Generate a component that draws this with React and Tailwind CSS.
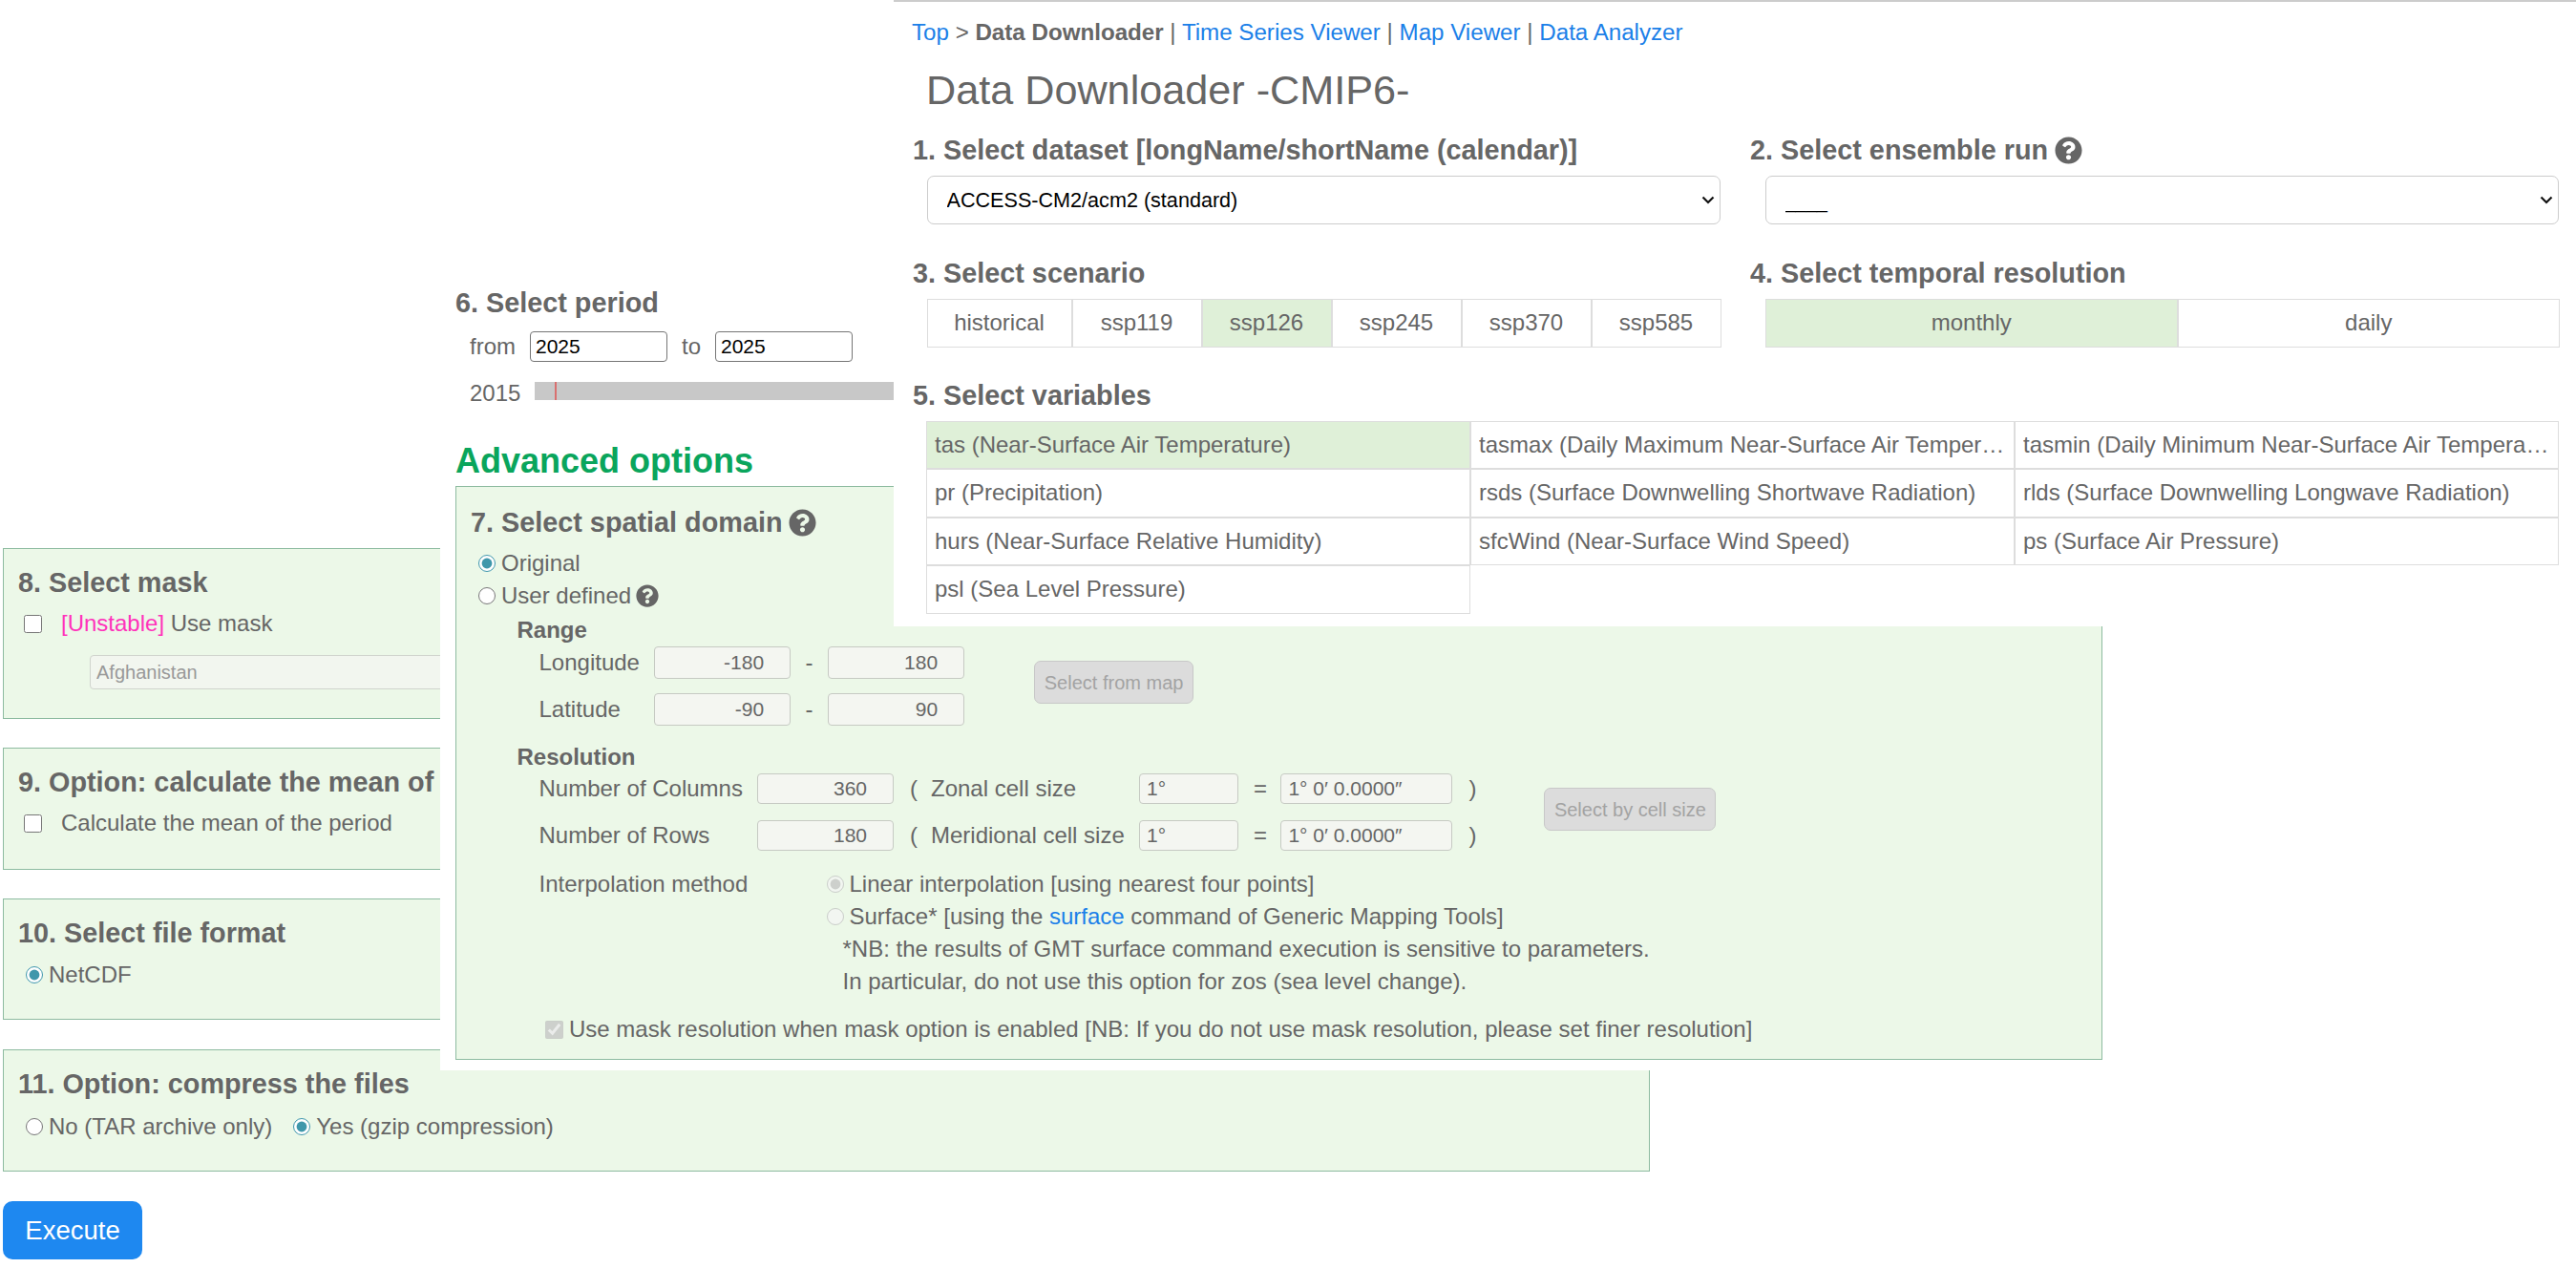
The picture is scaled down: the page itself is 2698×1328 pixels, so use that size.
import React from "react";
import { FaQuestionCircle } from "react-icons/fa";

const scenarios = ["historical", "ssp119", "ssp126", "ssp245", "ssp370", "ssp585"];
const variables = [
  "tas (Near-Surface Air Temperature)",
  "tasmax (Daily Maximum Near-Surface Air Temperature)",
  "tasmin (Daily Minimum Near-Surface Air Temperature)",
  "pr (Precipitation)",
  "rsds (Surface Downwelling Shortwave Radiation)",
  "rlds (Surface Downwelling Longwave Radiation)",
  "hurs (Near-Surface Relative Humidity)",
  "sfcWind (Near-Surface Wind Speed)",
  "ps (Surface Air Pressure)",
  "psl (Sea Level Pressure)",
];

const Heading = ({ children, className = "" }) => (
  <h3 className={`flex items-center h-[28px] text-[28.8px] font-bold leading-[28px] whitespace-nowrap ${className}`}>
    {children}
  </h3>
);

const Radio = ({ checked, disabled, name }) => (
  <input
    type="radio"
    name={name}
    defaultChecked={checked}
    disabled={disabled}
    className="w-[18px] h-[18px] m-0 shrink-0 accent-[#3f97ab]"
  />
);

const Field = ({ value, width, align = "right" }) => (
  <input
    disabled
    value={value}
    className={`${width} h-full px-[7px] rounded-[4px] border border-[#c6cac3] bg-[#f4f6f1] text-[#666] text-[21px] ${
      align === "right" ? "text-right pr-[27px]" : "text-left"
    }`}
  />
);

const GreyButton = ({ children, className = "" }) => (
  <button
    disabled
    className={`h-[45px] mt-[15px] rounded-[7px] border border-[#c8c8c8] bg-[#dcdcdc] text-[#a3a3a3] text-[20px] whitespace-nowrap ${className}`}
  >
    {children}
  </button>
);

const Box = ({ children, className = "" }) => (
  <div className={`border border-[#8dbba0] bg-[#ecf8e8] ${className}`}>{children}</div>
);

const Dropdown = ({ value, className = "", size }) => (
  <div className={`relative w-[831.5px] h-[51px] ${className}`}>
    <select className={`w-full h-full pl-[20px] pt-[2px] rounded-[7px] border border-[#ccc] bg-white text-black appearance-none ${size}`}>
      <option>{value}</option>
    </select>
    <svg
      viewBox="0 0 14 9"
      className="absolute right-[6px] top-[21px] w-[14px] h-[9px] pointer-events-none"
      fill="none"
      stroke="#111"
      strokeWidth="2.2"
    >
      <path d="M1.5 1.5 7 7l5.5-5.5" />
    </svg>
  </div>
);

const TopPanel = () => (
  <div className="absolute left-[936px] right-0 top-0 h-[656px] bg-white border-t-2 border-[#ccc] pl-[20px] pr-[18px]">
    <div className="mt-[20px] -ml-[1px] h-[24px] leading-[24px] text-[24.15px] whitespace-nowrap">
      <a className="text-[#1b80e8]">Top</a> &gt; <b>Data Downloader</b> |{" "}
      <a className="text-[#1b80e8]">Time Series Viewer</a> | <a className="text-[#1b80e8]">Map Viewer</a> |{" "}
      <a className="text-[#1b80e8]">Data Analyzer</a>
    </div>
    <h1 className="mt-[26px] ml-[14px] h-[44px] text-[43.2px] leading-[44px]">Data Downloader -CMIP6-</h1>

    <div className="grid grid-cols-[877px_1fr] mt-[27px]">
      <div>
        <Heading>1. Select dataset [longName/shortName (calendar)]</Heading>
        <Dropdown value="ACCESS-CM2/acm2 (standard)" size="text-[21.6px]" className="mt-[13px] ml-[14.5px]" />
      </div>
      <div>
        <Heading>
          2. Select ensemble run
          <FaQuestionCircle className="ml-[7px] w-[29px] h-[29px]" />
        </Heading>
        <Dropdown value="____" size="text-[20px]" className="mt-[13px] ml-[15.5px]" />
      </div>

      <div className="mt-[37px]">
        <Heading>3. Select scenario</Heading>
        <div className="mt-[13px] ml-[14.5px] flex h-[50.5px] w-[832px]">
          {scenarios.map((s, i) => (
            <div
              key={s}
              className={`flex items-center justify-center border border-[#ddd] ${i === 0 ? "w-[152px]" : "flex-1"} ${
                s === "ssp126" ? "bg-[#dff0d8]" : ""
              }`}
            >
              {s}
            </div>
          ))}
        </div>
      </div>
      <div className="mt-[37px]">
        <Heading>4. Select temporal resolution</Heading>
        <div className="mt-[13px] ml-[15.5px] flex h-[50.5px] w-[832px]">
          <div className="w-[432.5px] flex items-center justify-center border border-[#ddd] bg-[#dff0d8]">monthly</div>
          <div className="flex-1 flex items-center justify-center border border-[#ddd]">daily</div>
        </div>
      </div>
    </div>

    <Heading className="mt-[36px]">5. Select variables</Heading>
    <div className="mt-[13px] ml-[14px] w-[1710px] grid grid-cols-3 auto-rows-[50.5px]">
      {variables.map((v, i) => (
        <div
          key={v}
          className={`flex items-center min-w-0 px-[8px] border border-[#ddd] ${i === 0 ? "bg-[#dff0d8]" : ""}`}
        >
          <span className="truncate">{v}</span>
        </div>
      ))}
    </div>
  </div>
);

const MiddlePanel = () => (
  <div className="absolute left-[461px] top-[290px] w-[1755px] h-[831px] bg-white pl-[16px] pt-[13px]">
    <Heading>6. Select period</Heading>
    <div className="mt-[16px] ml-[15px] flex items-center h-[32px]">
      <span className="w-[63px]">from</span>
      <input defaultValue="2025" className="w-[144px] h-full px-[5px] rounded-[4px] border border-[#767676] text-black text-[21px]" />
      <span className="w-[50px] pl-[15px]">to</span>
      <input defaultValue="2025" className="w-[144px] h-full px-[5px] rounded-[4px] border border-[#767676] text-black text-[21px]" />
    </div>
    <div className="mt-[20px] ml-[15px] flex items-start h-[24px] leading-[24px]">
      <span className="w-[68px] mt-[1px]">2015</span>
      <div className="w-[500px] h-[19px] mt-[1px] bg-[#c8c8c8] pl-[21px]">
        <div className="w-[2px] h-full bg-[#d9706f]" />
      </div>
    </div>
    <h2 className="mt-[40px] h-[40px] leading-[40px] text-[36px] font-bold text-[#0aa55c]">Advanced options</h2>
    <Box className="mt-[6px] w-[1725px] h-[601px] pl-[15px]">
      <Heading className="mt-[23px]">
        7. Select spatial domain
        <FaQuestionCircle className="ml-[7px] w-[29px] h-[29px]" />
      </Heading>
      <div className="mt-[17px] ml-[8px] flex items-center gap-[6px] h-[24px]">
        <Radio name="domain" checked /> Original
      </div>
      <div className="mt-[10px] ml-[8px] flex items-center gap-[6px] h-[24px]">
        <Radio name="domain" /> User defined
        <FaQuestionCircle className="-ml-[1px] w-[24px] h-[24px]" />
      </div>
      <div className="mt-[12px] ml-[48.5px] h-[24px] leading-[24px] font-bold">Range</div>

      <div className="flex ml-[71.5px] mt-[5px]">
        <div>
          {[["Longitude", "-180", "180"], ["Latitude", "-90", "90"]].map(([label, a, b], i) => (
            <div key={label} className={`flex items-center h-[34px] ${i ? "mt-[15px]" : ""}`}>
              <span className="w-[120.6px]">{label}</span>
              <Field value={a} width="w-[143px]" />
              <span className="w-[39px] text-center">-</span>
              <Field value={b} width="w-[143px]" />
            </div>
          ))}
        </div>
        <GreyButton className="ml-[73px] w-[167px]">Select from map</GreyButton>
      </div>

      <div className="mt-[21px] ml-[48.5px] h-[24px] leading-[24px] font-bold">Resolution</div>
      <div className="flex ml-[71.5px] mt-[5px]">
        <div>
          {[["Number of Columns", "360", "Zonal cell size"], ["Number of Rows", "180", "Meridional cell size"]].map(
            ([label, n, cell], i) => (
              <div key={label} className={`flex items-center h-[32px] ${i ? "mt-[17px]" : ""}`}>
                <span className="w-[228.5px]">{label}</span>
                <Field value={n} width="w-[143px]" />
                <span className="w-[39px] pl-[17px]">(</span>
                <span className="w-[218px]">{cell}</span>
                <Field value="1°" width="w-[104px]" align="left" />
                <span className="w-[44.4px] pl-[16px]">=</span>
                <Field value="1° 0′ 0.0000″" width="w-[180px]" align="left" />
                <span className="w-[96px] pl-[17px]">)</span>
              </div>
            ),
          )}
        </div>
        <GreyButton className="w-[180px]">Select by cell size</GreyButton>
      </div>

      <div className="flex ml-[71.5px] mt-[23px]">
        <span className="w-[301px] h-[24px] leading-[24px]">Interpolation method</span>
        <div className="leading-[24px]">
          <div className="flex items-center gap-[6px] h-[24px]">
            <Radio name="interp" checked disabled /> Linear interpolation [using nearest four points]
          </div>
          <div className="flex items-center gap-[6px] h-[24px] mt-[10px] whitespace-pre">
            <Radio name="interp" disabled />
            <span>
              Surface* [using the <a className="text-[#1b80e8]">surface</a> command of Generic Mapping Tools]
            </span>
          </div>
          <div className="h-[24px] mt-[10px] pl-[17px]">
            *NB: the results of GMT surface command execution is sensitive to parameters.
          </div>
          <div className="h-[24px] mt-[10px] pl-[17px]">
            In particular, do not use this option for zos (sea level change).
          </div>
        </div>
      </div>
      <div className="flex items-center gap-[6px] ml-[78px] mt-[26px] h-[24px] whitespace-nowrap">
        <input type="checkbox" disabled defaultChecked className="w-[19px] h-[19px] m-0 shrink-0" />
        Use mask resolution when mask option is enabled [NB: If you do not use mask resolution, please set finer
        resolution]
      </div>
    </Box>
  </div>
);

const LeftPanel = () => (
  <div className="absolute left-[3px] top-[574px] w-[1725px] flex flex-col">
    <Box className="h-[179px] pl-[15px] pt-[21px]">
      <Heading>8. Select mask</Heading>
      <div className="mt-[17px] ml-[6px] flex items-center h-[24px]">
        <input type="checkbox" className="w-[19px] h-[19px] m-0 mr-[20px]" />
        <span className="text-[#ff33bb]">[Unstable]</span>&nbsp;Use mask
      </div>
      <select
        disabled
        className="block mt-[21px] ml-[75px] w-[900px] h-[36px] pl-[6px] rounded-[4px] border border-[#d0d4cd] bg-[#f2f6ef] text-[#999] text-[20px] appearance-none"
      >
        <option>Afghanistan</option>
      </select>
    </Box>
    <Box className="mt-[30px] h-[128px] pl-[15px] pt-[21px]">
      <Heading>9. Option: calculate the mean of</Heading>
      <div className="mt-[17px] ml-[6px] flex items-center h-[24px]">
        <input type="checkbox" className="w-[19px] h-[19px] m-0 mr-[20px]" />
        Calculate the mean of the period
      </div>
    </Box>
    <Box className="mt-[30px] h-[127px] pl-[15px] pt-[21px]">
      <Heading>10. Select file format</Heading>
      <div className="mt-[18px] ml-[8px] flex items-center gap-[6px] h-[24px]">
        <Radio name="format" checked /> NetCDF
      </div>
    </Box>
    <Box className="mt-[31px] h-[128px] pl-[15px] pt-[21px]">
      <Heading>11. Option: compress the files</Heading>
      <div className="mt-[19px] ml-[8px] flex items-center gap-[6px] h-[24px]">
        <Radio name="compress" /> No (TAR archive only)
        <span className="w-[10px]" />
        <Radio name="compress" checked /> Yes (gzip compression)
      </div>
    </Box>
    <button className="mt-[31px] w-[146px] h-[61px] rounded-[10px] bg-[#1e88f0] text-white text-[27.5px]">
      Execute
    </button>
  </div>
);

export default function App() {
  return (
    <div className="relative w-[2698px] h-[1328px] overflow-hidden bg-white text-[#666] text-[24px] font-['Liberation_Sans',Arial,sans-serif]">
      <LeftPanel />
      <MiddlePanel />
      <TopPanel />
    </div>
  );
}
